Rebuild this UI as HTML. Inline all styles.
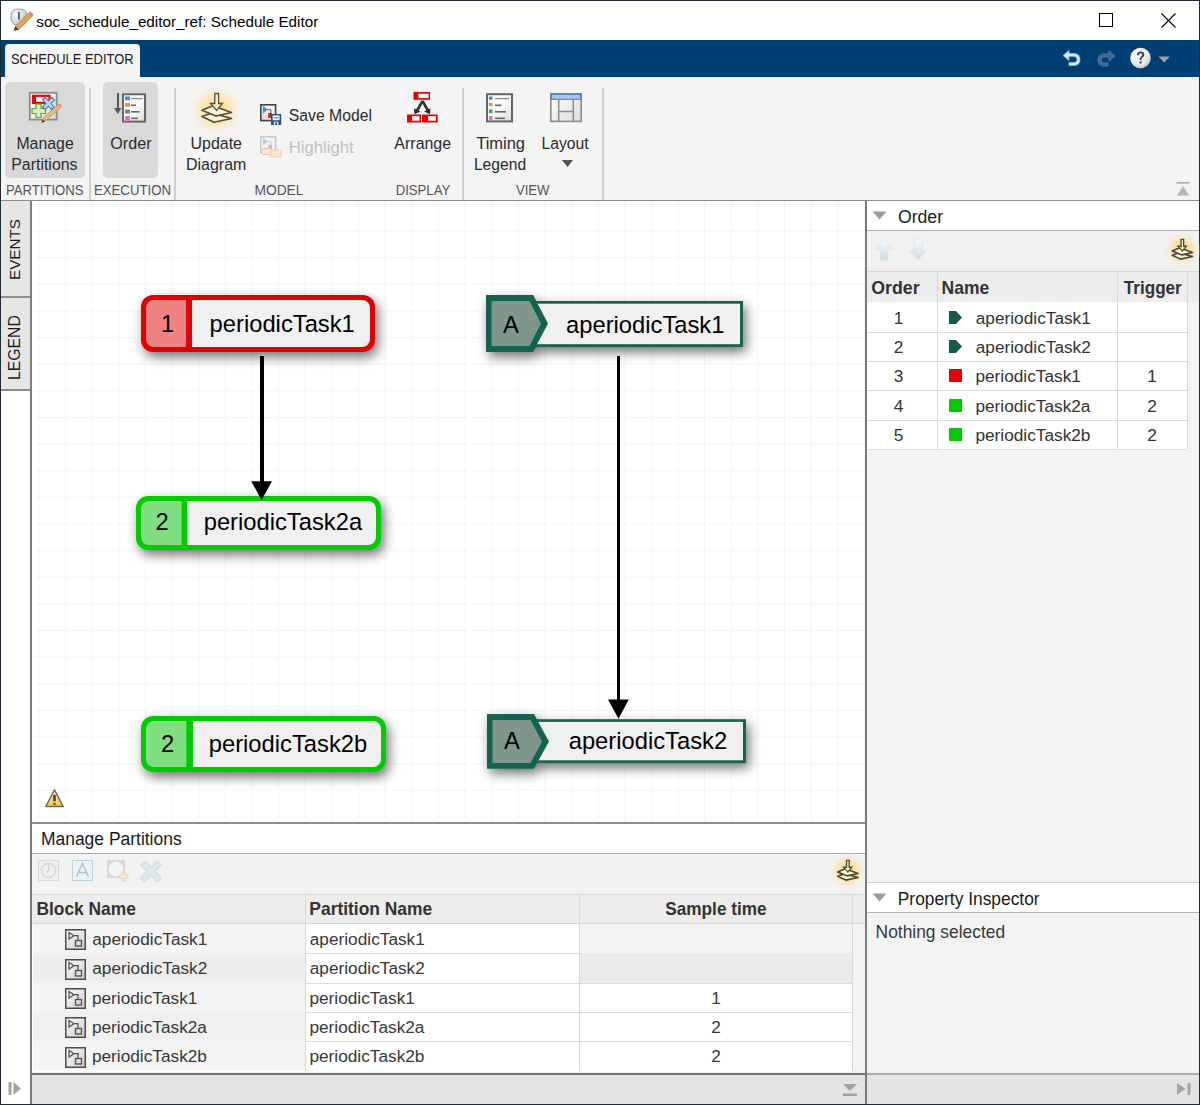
<!DOCTYPE html>
<html><head><meta charset="utf-8">
<style>
*{box-sizing:border-box;margin:0;padding:0}
html,body{width:1200px;height:1105px;overflow:hidden;background:#fff;font-family:"Liberation Sans",sans-serif;position:relative}
.a{position:absolute}
.rt{position:absolute;font-size:15.5px;color:#1f1f1f;white-space:nowrap;line-height:18px}
.gl{position:absolute;font-size:13px;color:#555;white-space:nowrap;line-height:15px;transform:scaleY(1.12);transform-origin:0 100%}
.pt{position:absolute;font-size:17.25px;color:#333;white-space:nowrap;line-height:20px}
.pb{position:absolute;font-size:17px;font-weight:bold;color:#333;white-space:nowrap;line-height:20px}
.nt{position:absolute;font-size:23.75px;color:#000;white-space:nowrap;line-height:28px}
.hl{position:absolute;background:#d9d9d9;border-radius:5px}
.sep{position:absolute;width:2px;background:#d0d0d0}
</style></head><body>
<!-- window border -->
<div class="a" style="left:0;top:0;width:1200px;height:1px;background:#1e2a36"></div>
<div class="a" style="left:0;top:0;width:1px;height:1105px;background:#1e2a36"></div>
<div class="a" style="left:1199px;top:0;width:1px;height:1105px;background:#1e2a36"></div>

<!-- title -->
<div class="a" style="left:1099px;top:13px;width:14px;height:14px;border:1px solid #000"></div>
<svg class="a" style="left:1160px;top:12px" width="17" height="17"><path d="M1.5 1.5L15.5 15.5M15.5 1.5L1.5 15.5" stroke="#000" stroke-width="1.1"/></svg>

<!-- blue band -->
<div class="a" style="left:1px;top:40px;width:1198px;height:37px;background:#003f73"></div>
<div class="a" style="left:5px;top:44px;width:135px;height:33px;background:#f4f4f4;border-radius:4px 4px 0 0"></div>

<!-- ribbon -->
<div class="a" style="left:1px;top:77px;width:1198px;height:123px;background:#f4f4f4"></div>
<div class="a" style="left:1px;top:200px;width:1198px;height:1px;background:#8c8c8c"></div>
<div class="hl" style="left:5px;top:82px;width:80px;height:96px"></div>
<div class="hl" style="left:103px;top:82px;width:55px;height:96px"></div>
<div class="sep" style="left:89px;top:88px;height:112px"></div>
<div class="sep" style="left:174px;top:88px;height:112px"></div>
<div class="sep" style="left:462px;top:88px;height:112px"></div>
<div class="sep" style="left:602px;top:88px;height:112px"></div>

<svg class="a" style="left:562px;top:160px" width="11" height="8"><path d="M0 0H11L5.5 7Z" fill="#555"/></svg>



<!-- title icon -->
<svg class="a" style="left:10px;top:8px" width="24" height="24" viewBox="0 0 24 24">
<defs><radialGradient id="clk" cx="0.35" cy="0.35" r="0.75"><stop offset="0" stop-color="#f2f6f8"/><stop offset="1" stop-color="#bcc6ce"/></radialGradient></defs>
<path d="M1 7.5Q1 1 8.5 1H10Q17 1 17 8V10Q17 17.5 9 17.5Q1 17.5 1 10Z" fill="url(#clk)" stroke="#9ca2a8" stroke-width="1"/>
<rect x="8" y="4" width="1.8" height="7.5" fill="#5a5a5a"/>
<path d="M5.3 18.3L18.8 4.8L22.2 8.2L8.7 21.7Z" fill="#e4a458" stroke="#a87034" stroke-width="0.7"/>
<path d="M18.8 4.8L20.3 3.3L23.7 6.7L22.2 8.2Z" fill="#e67aa0"/>
<path d="M3.6 22.8L5.3 18.3L8.7 21.7Z" fill="#3a3a3a"/>
</svg>

<!-- undo / redo / help -->
<svg class="a" style="left:1060px;top:48px" width="24" height="21" viewBox="0 0 24 21">
<path d="M3 7.5L9 2.5V5.5H14Q20 5.5 20 11.5Q20 17.5 14 17.5H9V14.5H14Q17 14.5 17 11.5Q17 8.5 14 8.5H9V12.5Z" fill="#d4e8f6" stroke="#8fb6d8" stroke-width="0.8"/>
</svg>
<svg class="a" style="left:1094px;top:49px" width="24" height="20" viewBox="0 0 24 20">
<path d="M21 7L15 2V5H10Q4 5 4 11Q4 17 10 17H14V14H10Q7 14 7 11Q7 8 10 8H15V12Z" fill="#3f6890" stroke="#5a80a8" stroke-width="0.8"/>
</svg>
<svg class="a" style="left:1129px;top:47px" width="23" height="22" viewBox="0 0 23 22">
<defs><radialGradient id="hg" cx="0.4" cy="0.35" r="0.7"><stop offset="0" stop-color="#ffffff"/><stop offset="0.7" stop-color="#e6e8ea"/><stop offset="1" stop-color="#b8bcc0"/></radialGradient></defs>
<circle cx="11.5" cy="11" r="10.3" fill="url(#hg)"/>
<path d="M8 8.2Q8 4.5 11.7 4.5Q15.3 4.5 15.3 7.7Q15.3 9.6 13.2 10.7Q12.3 11.3 12.3 13H10.6Q10.5 10.5 12 9.5Q13.3 8.6 13.3 7.8Q13.3 6.3 11.6 6.3Q10.1 6.3 10 8.2Z" fill="#3b3d52"/>
<rect x="10.6" y="14.3" width="1.9" height="2.2" fill="#3b3d52"/>
</svg>
<svg class="a" style="left:1158px;top:56px" width="13" height="7"><path d="M0.5 0.5H12L6.2 6.5Z" fill="#a39e99"/></svg>

<!-- Manage Partitions icon -->
<svg class="a" style="left:28px;top:91px" width="36" height="36" viewBox="28 91 36 36">
<defs><linearGradient id="fr" x1="0" y1="0" x2="1" y2="1"><stop offset="0" stop-color="#fff"/><stop offset="1" stop-color="#dcdcdc"/></linearGradient></defs>
<rect x="29.8" y="92.8" width="26.8" height="26.8" fill="url(#fr)" stroke="#8c8c8c" stroke-width="1.8"/>
<rect x="33" y="95.8" width="16.5" height="7" fill="#fff" stroke="#ee0000" stroke-width="2.2"/>
<rect x="32" y="95" width="4" height="9" fill="#ee0000"/>
<path d="M36 104H41V108.5H45.5V113.5H41V117.5H36V113.5H32V108.5H36Z" fill="#d6ecb0" stroke="#5ea040" stroke-width="1.2"/>
<path d="M42.5 99.5L45 97.5L48.5 101L52 97.5L54.5 100L51 103.5L54 107L51.5 109.5L48.5 106L45 109.5L42.5 107L46 103.5Z" fill="#bcdcf0" stroke="#5078a8" stroke-width="1.1"/>
<path d="M42 121.5L44 117L58.5 104.5L61 107L47 119.5Z" fill="#e6bc80" stroke="#b88a50" stroke-width="0.8"/>
<path d="M58.5 104.5L59.8 103.3L62.3 105.8L61 107Z" fill="#e888b8"/>
<path d="M41.5 123L42.5 119.8L45 121.5Z" fill="#333"/>
</svg>

<!-- Order icon -->
<svg class="a" style="left:112px;top:91px" width="36" height="34" viewBox="112 91 36 34">
<defs><linearGradient id="fr2" x1="0" y1="0" x2="1" y2="1"><stop offset="0" stop-color="#fff"/><stop offset="0.6" stop-color="#f6f6f6"/><stop offset="1" stop-color="#d6d6d6"/></linearGradient></defs>
<rect x="117" y="93" width="2" height="16" fill="#555"/>
<path d="M114 108H121.5L117.8 114Z" fill="#555"/>
<rect x="123" y="94.3" width="22" height="27.3" fill="url(#fr2)" stroke="#666" stroke-width="2"/>
<rect x="125" y="96.5" width="5" height="3.8" fill="#3a8ee0"/>
<rect x="125" y="103" width="5" height="3.8" fill="#e89040"/>
<rect x="125" y="109.5" width="5" height="4" fill="#40a060"/>
<rect x="125" y="116" width="5" height="4.8" fill="#e070d0"/>
<rect x="131" y="98" width="11.5" height="1.2" fill="#888"/>
<rect x="131" y="104.5" width="5" height="1.6" fill="#666"/>
<rect x="131" y="111" width="8.5" height="1.6" fill="#666"/>
<rect x="131" y="117.5" width="7" height="1.6" fill="#666"/>
</svg>

<!-- Update Diagram icon -->
<svg class="a" style="left:186px;top:84px" width="60" height="56" viewBox="186 84 60 56">
<defs><radialGradient id="glow" cx="0.5" cy="0.5" r="0.5"><stop offset="0" stop-color="#fcd98c" stop-opacity="1"/><stop offset="0.5" stop-color="#fde3aa" stop-opacity="0.85"/><stop offset="1" stop-color="#f4f4f4" stop-opacity="0"/></radialGradient></defs>
<ellipse cx="216" cy="110" rx="29" ry="27" fill="url(#glow)"/>
<path d="M202 116.5L212 113L231.5 118.5L214 122.2Z" fill="#f8f2d4" stroke="#524c34" stroke-width="1.6" stroke-linejoin="round"/>
<path d="M202 110.3L213 105.8L231.5 112.5L216 116Z" fill="#fcf8dc" stroke="#524c34" stroke-width="1.6" stroke-linejoin="round"/>
<path d="M214.8 93.5H218.6V103.5H222.5L216.7 110.5L210.5 103.5H214.8Z" fill="#f6f0c8" stroke="#5e5236" stroke-width="1.3"/>
</svg>

<!-- Save Model icon -->
<svg class="a" style="left:259px;top:103px" width="24" height="24" viewBox="259 103 24 24">
<defs><linearGradient id="fr3" x1="1" y1="0" x2="0" y2="1"><stop offset="0" stop-color="#fff"/><stop offset="1" stop-color="#d4d4d4"/></linearGradient></defs>
<rect x="260.8" y="104.8" width="14.8" height="15.8" fill="url(#fr3)" stroke="#444" stroke-width="1.6"/>
<path d="M263 106L267.8 109.6L263 113.5Z" fill="#3a8ee0"/>
<path d="M267.5 109.6H270.8V113.5" stroke="#555" stroke-width="1" fill="none"/>
<rect x="268.2" y="113" width="3.8" height="5" fill="#c42a1a"/>
<rect x="271" y="114" width="10.2" height="11" fill="#214f86"/>
<rect x="272.6" y="115.4" width="7" height="4.8" fill="#f4f6f8"/>
<rect x="273.4" y="117.3" width="5.4" height="1" fill="#4a78b0"/>
<rect x="273.8" y="121.6" width="4.6" height="3.4" fill="#e8ecf0"/>
<rect x="275.4" y="122.3" width="1.4" height="2.7" fill="#222"/>
</svg>

<!-- Highlight icon (disabled) -->
<svg class="a" style="left:259px;top:135px" width="24" height="24" viewBox="259 135 24 24">
<rect x="260.8" y="136.8" width="14.8" height="15.8" fill="#f2f2f2" stroke="#c4c4c4" stroke-width="1.4"/>
<path d="M263 138L267.8 141.6L263 145.5Z" fill="#a8d0f4"/>
<path d="M267.5 141.6H270.8V145.5" stroke="#c8c8c8" stroke-width="1" fill="none"/>
<rect x="268.2" y="145" width="3.8" height="5" fill="#eab4b4"/>
<rect x="262" y="148.5" width="10" height="6" rx="2" fill="#f8e8cc" stroke="#ecc0b0" stroke-width="1"/>
<rect x="271" y="150" width="10" height="7" fill="#f8e6cc" stroke="#ecc8b8" stroke-width="0.8"/>
</svg>

<!-- Arrange icon -->
<svg class="a" style="left:405px;top:90px" width="36" height="34" viewBox="405 90 36 34">
<rect x="413.5" y="92" width="16.5" height="7.8" fill="#e80000"/>
<rect x="418.5" y="93.7" width="10" height="4.4" fill="#fff"/>
<rect x="407" y="114.5" width="14" height="8" fill="#e80000"/>
<rect x="412" y="116.2" width="7.5" height="4.5" fill="#fff"/>
<rect x="422" y="114.5" width="15.7" height="8" fill="#e80000"/>
<rect x="428" y="116.2" width="8" height="4.5" fill="#fff"/>
<path d="M422.5 101L416.5 111.5M422.5 101L428.5 111.5" stroke="#333" stroke-width="2.6" fill="none"/>
<path d="M414 108.5L414.5 114.3L420.5 111.5Z" fill="#2a2a2a"/>
<path d="M430.5 108.5L430 114.3L424 111.5Z" fill="#2a2a2a"/>
</svg>

<!-- Timing Legend icon -->
<svg class="a" style="left:485px;top:92px" width="30" height="32" viewBox="485 92 30 32">
<rect x="487" y="94.2" width="25" height="27.2" fill="url(#fr2)" stroke="#666" stroke-width="2"/>
<rect x="489" y="96.5" width="3.5" height="3.2" fill="#3a8ee0"/>
<rect x="489" y="103" width="3.5" height="3.2" fill="#e89040"/>
<rect x="489" y="109.5" width="3.5" height="3.6" fill="#40a060"/>
<rect x="489" y="116" width="3.5" height="4" fill="#e070d0"/>
<rect x="495" y="98" width="14" height="1.2" fill="#888"/>
<rect x="495" y="104.5" width="6.5" height="1.6" fill="#666"/>
<rect x="495" y="111" width="11" height="1.6" fill="#666"/>
<rect x="495" y="117.5" width="10" height="1.6" fill="#666"/>
</svg>

<!-- Layout icon -->
<svg class="a" style="left:549px;top:92px" width="35" height="32" viewBox="549 92 35 32">
<defs><linearGradient id="lg" x1="0" y1="0" x2="1" y2="1"><stop offset="0" stop-color="#fff"/><stop offset="1" stop-color="#dcdcdc"/></linearGradient></defs>
<rect x="550.8" y="93.8" width="30.4" height="27.6" fill="url(#lg)" stroke="#8a8a8a" stroke-width="1.6"/>
<rect x="551.3" y="94.3" width="29.4" height="5" fill="#a4c4ea" stroke="#4a78b0" stroke-width="1"/>
<path d="M558.7 99.5V121M573.3 99.5V121M558.7 111.5H573.3" stroke="#8a8a8a" stroke-width="1.5"/>
</svg>
<!-- collapse ribbon -->
<svg class="a" style="left:1175px;top:181px" width="16" height="16"><rect x="1.5" y="1" width="13" height="1.6" fill="#a8a8a8"/><path d="M2 14.5H14L8 5Z" fill="#b4b4b4"/></svg>

<!-- sidebar -->
<div class="a" style="left:1px;top:201px;width:29px;height:96px;background:#e6e6e6"></div>
<div class="a" style="left:1px;top:296px;width:29px;height:2px;background:#8c8c8c"></div>
<div class="a" style="left:1px;top:298px;width:29px;height:91px;background:#e6e6e6"></div>
<div class="a" style="left:1px;top:389px;width:29px;height:2px;background:#8c8c8c"></div>

<div class="a" style="left:8px;top:280px;transform:rotate(-90deg);transform-origin:0 0;font-size:15.25px;color:#1a1a1a;line-height:14px;white-space:nowrap">EVENTS</div>
<div class="a" style="left:8px;top:380px;transform:rotate(-90deg);transform-origin:0 0;font-size:15.75px;color:#1a1a1a;line-height:14px;white-space:nowrap">LEGEND</div>

<!-- canvas -->
<div id="canvas" class="a" style="left:32px;top:201px;width:833px;height:621px;background-color:#fff;
background-image:linear-gradient(to right,#f2f4f6 1px,transparent 1px),linear-gradient(to bottom,#f2f4f6 1px,transparent 1px);
background-size:26.63px 26.63px;background-position:6.5px 3px"></div>

<div class="a" style="left:32px;top:822px;width:833px;height:2px;background:#8c8c8c"></div>


<!-- canvas content -->
<svg class="a" style="left:32px;top:201px" width="833" height="621" viewBox="32 201 833 621">
<defs>
<filter id="sh" x="-20%" y="-40%" width="150%" height="200%"><feDropShadow dx="3" dy="5" stdDeviation="6" flood-color="#000" flood-opacity="0.55"/></filter>
<clipPath id="c1"><rect x="146" y="300" width="224" height="47" rx="8"/></clipPath>
<clipPath id="c2"><rect x="141" y="501" width="235" height="44" rx="8"/></clipPath>
<clipPath id="c3"><rect x="146" y="721" width="235" height="46" rx="8"/></clipPath>
</defs>
<!-- periodicTask1 -->
<g filter="url(#sh)">
<rect x="141" y="295" width="234" height="57" rx="12" fill="#e20000"/>
</g>
<g clip-path="url(#c1)"><rect x="146" y="300" width="40" height="47" fill="#ee8282"/><rect x="192" y="300" width="178" height="47" fill="#f0f0f0"/></g>
<text x="161" y="332.20" font-family="Liberation Sans" font-size="23.75" fill="#000">1</text>
<text x="209.6" y="332.20" font-family="Liberation Sans" font-size="23.75" fill="#000">periodicTask1</text>

<!-- periodicTask2a -->
<g filter="url(#sh)">
<rect x="136" y="496" width="245" height="54" rx="12" fill="#00cc00"/>
</g>
<g clip-path="url(#c2)"><rect x="141" y="501" width="40.6" height="44" fill="#80dd80"/><rect x="187.4" y="501" width="189" height="44" fill="#f0f0f0"/></g>
<text x="155.6" y="530.20" font-family="Liberation Sans" font-size="23.75" fill="#000">2</text>
<text x="203.7" y="530.20" font-family="Liberation Sans" font-size="23.75" fill="#000">periodicTask2a</text>

<!-- periodicTask2b -->
<g filter="url(#sh)">
<rect x="141" y="716" width="245" height="56" rx="12" fill="#00cc00"/>
</g>
<g clip-path="url(#c3)"><rect x="146" y="721" width="40.3" height="46" fill="#80dd80"/><rect x="193" y="721" width="189" height="46" fill="#f0f0f0"/></g>
<text x="161" y="751.75" font-family="Liberation Sans" font-size="23.75" fill="#000">2</text>
<text x="208.75" y="751.75" font-family="Liberation Sans" font-size="23.75" fill="#000">periodicTask2b</text>

<!-- aperiodicTask1 -->
<g filter="url(#sh)">
<rect x="534" y="301" width="209" height="46" fill="#12634f"/>
<path d="M486 295H533L548 323.5L533 352H486Z" fill="#12634f"/>
</g>
<rect x="537" y="303.7" width="203" height="40.5" fill="#f0f0f0"/>
<path d="M486 295H533L548 323.5L533 352H486Z" fill="#12634f"/>
<path d="M491.5 301H529.5L541 323.5L529.5 346H491.5Z" fill="#7f968c"/>
<text x="503" y="332.50" font-family="Liberation Sans" font-size="23.75" fill="#000">A</text>
<text x="566" y="332.50" font-family="Liberation Sans" font-size="23.75" fill="#000">aperiodicTask1</text>

<!-- aperiodicTask2 -->
<g filter="url(#sh)">
<rect x="535" y="719.2" width="211" height="43.8" fill="#12634f"/>
<path d="M487 714.3H534L549 741.4L534 768.5H487Z" fill="#12634f"/>
</g>
<rect x="538" y="721.9" width="205" height="38.4" fill="#f0f0f0"/>
<path d="M487 714.3H534L549 741.4L534 768.5H487Z" fill="#12634f"/>
<path d="M492.5 720H530.5L542 741.4L530.5 763H492.5Z" fill="#7f968c"/>
<text x="504" y="748.80" font-family="Liberation Sans" font-size="23.75" fill="#000">A</text>
<text x="568.7" y="748.80" font-family="Liberation Sans" font-size="23.75" fill="#000">aperiodicTask2</text>

<!-- connections -->
<rect x="260" y="356" width="4" height="126" fill="#000"/>
<path d="M251.2 481.2H272L261.6 500Z" fill="#000"/>
<rect x="617" y="356" width="3" height="345" fill="#000"/>
<path d="M608 699.6H628.8L618.5 718.8Z" fill="#000"/>
</svg>

<!-- right panel -->
<div class="a" style="left:867px;top:201px;width:332px;height:872px;background:#f3f3f3"></div>


<div class="a" style="left:867px;top:201px;width:332px;height:29px;background:#fff"></div>
<div class="a" style="left:867px;top:230px;width:332px;height:1px;background:#b4b4b4"></div>
<svg class="a" style="left:872px;top:211px" width="15" height="9"><path d="M0.5 0.5H14.5L7.5 8.5Z" fill="#9c9c9c"/></svg>
<div class="a" style="left:867px;top:231px;width:332px;height:40px;background:#f1f1f1"></div>
<div class="a" style="left:867px;top:271px;width:332px;height:1px;background:#d6d6d6"></div>
<!-- up/down arrows disabled -->
<svg class="a" style="left:874px;top:238px" width="20" height="23" viewBox="0 0 20 23"><defs><linearGradient id="ag" x1="0" y1="0" x2="0" y2="1"><stop offset="0" stop-color="#f4fafc"/><stop offset="1" stop-color="#cfdde4"/></linearGradient></defs><path d="M10 1L19 11H14V22H6V11H1Z" fill="url(#ag)" stroke="#d8e4ea" stroke-width="0.8"/></svg>
<svg class="a" style="left:908px;top:238px" width="20" height="23" viewBox="0 0 20 23"><path d="M6 1H14V12H19L10 22L1 12H6Z" fill="url(#ag)" stroke="#d8e4ea" stroke-width="0.8"/></svg>
<!-- update icon small -->
<svg class="a" style="left:1158px;top:230px" width="42" height="40" viewBox="1158 230 42 40">
<ellipse cx="1182" cy="250" rx="20" ry="19.5" fill="url(#glow2)"/>
<g transform="translate(1171.5 239.0) scale(0.690)">
<path d="M1 23.5L11 20L30.5 25.5L13 29.2Z" fill="#f8f2d4" stroke="#4a4430" stroke-width="2.3" stroke-linejoin="round"/>
<path d="M1 17.3L12 12.8L30.5 19.5L15 23Z" fill="#fcf8dc" stroke="#4a4430" stroke-width="2.3" stroke-linejoin="round"/>
<path d="M13.8 0.5H17.6V10.5H21.5L15.7 17.5L9.5 10.5H13.8Z" fill="#f6f0c8" stroke="#54482e" stroke-width="1.9"/>
</g>
</svg>
<!-- table header -->
<div class="a" style="left:867px;top:272px;width:332px;height:30px;background:#ececec"></div>
<div class="a" style="left:867px;top:302px;width:320px;height:147px;background:#fff"></div>
<div class="a" style="left:937px;top:272px;width:1px;height:177px;background:#d9d9d9"></div>
<div class="a" style="left:1117px;top:272px;width:1px;height:177px;background:#d9d9d9"></div>
<div class="a" style="left:1187px;top:272px;width:1px;height:177px;background:#d9d9d9"></div>
<div class="a" style="left:867px;top:332.0px;width:320px;height:1px;background:#dcdcdc"></div>
<svg class="a" style="left:949px;top:311.0px" width="13" height="13"><path d="M0 0H7L13 6.5L7 13H0Z" fill="#155c4a"/></svg>
<div class="a" style="left:867px;top:361.2px;width:320px;height:1px;background:#dcdcdc"></div>
<svg class="a" style="left:949px;top:340.2px" width="13" height="13"><path d="M0 0H7L13 6.5L7 13H0Z" fill="#155c4a"/></svg>
<div class="a" style="left:867px;top:390.4px;width:320px;height:1px;background:#dcdcdc"></div>
<div class="a" style="left:949px;top:369.4px;width:13px;height:13px;background:#e60000"></div>
<div class="a" style="left:867px;top:419.6px;width:320px;height:1px;background:#dcdcdc"></div>
<div class="a" style="left:949px;top:398.6px;width:13px;height:13px;background:#00cc00"></div>
<div class="a" style="left:867px;top:448.8px;width:320px;height:1px;background:#dcdcdc"></div>
<div class="a" style="left:949px;top:427.8px;width:13px;height:13px;background:#00cc00"></div>

<!-- property inspector -->
<div class="a" style="left:867px;top:882px;width:332px;height:1px;background:#d0d0d0"></div>
<div class="a" style="left:867px;top:883px;width:332px;height:29px;background:#fff"></div>
<div class="a" style="left:867px;top:912px;width:332px;height:1px;background:#b4b4b4"></div>
<svg class="a" style="left:872px;top:893px" width="15" height="9"><path d="M0.5 0.5H14.5L7.5 8.5Z" fill="#9c9c9c"/></svg>

<!-- bottom panel -->
<div class="a" style="left:32px;top:824px;width:833px;height:249px;background:#f3f3f3"></div>


<div class="a" style="left:32px;top:824px;width:833px;height:29px;background:#fff"></div>
<div class="a" style="left:32px;top:853px;width:833px;height:1px;background:#a8a8a8"></div>
<div class="a" style="left:32px;top:854px;width:833px;height:40px;background:#f2f2f2"></div>
<!-- toolbar icons (disabled) -->
<svg class="a" style="left:37px;top:859px" width="130" height="24" viewBox="37 859 130 24">
<rect x="38.5" y="860.5" width="20" height="20" fill="#f0f0f0" stroke="#d8d8d8" stroke-width="1"/>
<circle cx="48.5" cy="870.5" r="7" fill="none" stroke="#d4d4d4" stroke-width="1.3"/>
<path d="M48.5 864.5V870.8L46 873" stroke="#d0d0d0" stroke-width="1.2" fill="none"/>
<rect x="72.5" y="860.5" width="20" height="20" fill="#eef2f4" stroke="#b8d4dc" stroke-width="1"/>
<path d="M76.5 877L82.5 863L88.5 877M78.5 872.5H86.5" stroke="#a8c0c8" stroke-width="1.3" fill="none"/>
<rect x="107" y="860" width="18" height="18" fill="#d8d8d8"/>
<circle cx="116" cy="869" r="7.5" fill="#f4f4f4"/>
<path d="M122 872H125V875H128V878H125V881H122V878H119V875H122Z" fill="#f4eccc" stroke="#e0d4a8" stroke-width="0.8"/>
<path d="M140.5 865L144.5 861L151 867.5L157.5 861L161.5 865L155 871.5L161.5 878L157.5 882L151 875.5L144.5 882L140.5 878L147 871.5Z" fill="#dfe9ee" stroke="#c4d6de" stroke-width="1"/>
</svg>
<svg class="a" style="left:826px;top:852px" width="42" height="40" viewBox="826 852 42 40">
<defs><radialGradient id="glow2" cx="0.5" cy="0.5" r="0.5"><stop offset="0" stop-color="#fbd487" stop-opacity="1"/><stop offset="0.55" stop-color="#fde2a8" stop-opacity="0.75"/><stop offset="1" stop-color="#f4f4f4" stop-opacity="0"/></radialGradient></defs><ellipse cx="847.5" cy="871" rx="20" ry="19.5" fill="url(#glow2)"/>
<g transform="translate(837.0 860.0) scale(0.690)">
<path d="M1 23.5L11 20L30.5 25.5L13 29.2Z" fill="#f8f2d4" stroke="#4a4430" stroke-width="2.3" stroke-linejoin="round"/>
<path d="M1 17.3L12 12.8L30.5 19.5L15 23Z" fill="#fcf8dc" stroke="#4a4430" stroke-width="2.3" stroke-linejoin="round"/>
<path d="M13.8 0.5H17.6V10.5H21.5L15.7 17.5L9.5 10.5H13.8Z" fill="#f6f0c8" stroke="#54482e" stroke-width="1.9"/>
</g>
</svg>
<!-- header -->
<div class="a" style="left:32px;top:894px;width:833px;height:1px;background:#dadada"></div>
<div class="a" style="left:32px;top:895px;width:833px;height:28px;background:#ececec"></div>
<div class="a" style="left:32px;top:923px;width:821px;height:149px;background:#fff"></div>
<div class="a" style="left:32px;top:923px;width:833px;height:1px;background:#d4d4d4"></div>
<div class="a" style="left:33px;top:924.0px;width:272px;height:29.3px;background:#f4f4f4"></div>
<div class="a" style="left:580px;top:924.0px;width:273px;height:29.3px;background:#f3f3f3"></div>
<div class="a" style="left:33px;top:953.3px;width:820px;height:1px;background:#dcdcdc"></div>
<svg class="a" style="left:65px;top:929.3px" width="21" height="21" viewBox="0 0 21 21">
<rect x="0.75" y="0.75" width="19.5" height="19.5" fill="url(#bi)" stroke="#4a4a4a" stroke-width="1.5"/>
<path d="M4 3.5V10L9 6.7Z" fill="none" stroke="#555" stroke-width="1.3"/>
<path d="M9 6.7H13V11.5" fill="none" stroke="#555" stroke-width="1.3"/>
<rect x="10.5" y="11.5" width="6" height="5.5" fill="none" stroke="#555" stroke-width="1.4"/>
</svg>
<div class="a" style="left:33px;top:953.3px;width:272px;height:29.3px;background:#eeeeee"></div>
<div class="a" style="left:580px;top:953.3px;width:273px;height:29.3px;background:#ebebeb"></div>
<div class="a" style="left:33px;top:982.6px;width:820px;height:1px;background:#dcdcdc"></div>
<svg class="a" style="left:65px;top:958.6px" width="21" height="21" viewBox="0 0 21 21">
<rect x="0.75" y="0.75" width="19.5" height="19.5" fill="url(#bi)" stroke="#4a4a4a" stroke-width="1.5"/>
<path d="M4 3.5V10L9 6.7Z" fill="none" stroke="#555" stroke-width="1.3"/>
<path d="M9 6.7H13V11.5" fill="none" stroke="#555" stroke-width="1.3"/>
<rect x="10.5" y="11.5" width="6" height="5.5" fill="none" stroke="#555" stroke-width="1.4"/>
</svg>
<div class="a" style="left:33px;top:982.6px;width:272px;height:29.3px;background:#f4f4f4"></div>
<div class="a" style="left:33px;top:1011.9px;width:820px;height:1px;background:#dcdcdc"></div>
<svg class="a" style="left:65px;top:987.9px" width="21" height="21" viewBox="0 0 21 21">
<rect x="0.75" y="0.75" width="19.5" height="19.5" fill="url(#bi)" stroke="#4a4a4a" stroke-width="1.5"/>
<path d="M4 3.5V10L9 6.7Z" fill="none" stroke="#555" stroke-width="1.3"/>
<path d="M9 6.7H13V11.5" fill="none" stroke="#555" stroke-width="1.3"/>
<rect x="10.5" y="11.5" width="6" height="5.5" fill="none" stroke="#555" stroke-width="1.4"/>
</svg>
<div class="a" style="left:33px;top:1011.9px;width:272px;height:29.3px;background:#f0f0f0"></div>
<div class="a" style="left:33px;top:1041.2px;width:820px;height:1px;background:#dcdcdc"></div>
<svg class="a" style="left:65px;top:1017.2px" width="21" height="21" viewBox="0 0 21 21">
<rect x="0.75" y="0.75" width="19.5" height="19.5" fill="url(#bi)" stroke="#4a4a4a" stroke-width="1.5"/>
<path d="M4 3.5V10L9 6.7Z" fill="none" stroke="#555" stroke-width="1.3"/>
<path d="M9 6.7H13V11.5" fill="none" stroke="#555" stroke-width="1.3"/>
<rect x="10.5" y="11.5" width="6" height="5.5" fill="none" stroke="#555" stroke-width="1.4"/>
</svg>
<div class="a" style="left:33px;top:1041.2px;width:272px;height:29.3px;background:#f4f4f4"></div>
<svg class="a" style="left:65px;top:1046.5px" width="21" height="21" viewBox="0 0 21 21">
<rect x="0.75" y="0.75" width="19.5" height="19.5" fill="url(#bi)" stroke="#4a4a4a" stroke-width="1.5"/>
<path d="M4 3.5V10L9 6.7Z" fill="none" stroke="#555" stroke-width="1.3"/>
<path d="M9 6.7H13V11.5" fill="none" stroke="#555" stroke-width="1.3"/>
<rect x="10.5" y="11.5" width="6" height="5.5" fill="none" stroke="#555" stroke-width="1.4"/>
</svg>

<div class="a" style="left:305px;top:895px;width:1px;height:176px;background:#d9d9d9"></div>
<div class="a" style="left:579px;top:895px;width:1px;height:176px;background:#d9d9d9"></div>
<div class="a" style="left:852px;top:895px;width:1px;height:176px;background:#d9d9d9"></div>
<svg class="a" style="left:0;top:0" width="0" height="0"><defs><linearGradient id="bi" x1="0" y1="0" x2="1" y2="1"><stop offset="0" stop-color="#fafafa"/><stop offset="1" stop-color="#d0d0d0"/></linearGradient></defs></svg>

<!-- status bar -->
<div class="a" style="left:32px;top:1073px;width:834px;height:2px;background:#747474"></div>
<div class="a" style="left:866px;top:1073px;width:333px;height:2px;background:#a9a9a9"></div>
<div class="a" style="left:32px;top:1075px;width:1167px;height:30px;background:#e4e4e4"></div>
<div class="a" style="left:30px;top:201px;width:2px;height:904px;background:#7c7c7c"></div>
<div class="a" style="left:865px;top:201px;width:2px;height:904px;background:#7c7c7c"></div>

<svg class="a" style="left:8px;top:1081px" width="15" height="15"><rect x="0.5" y="1" width="3" height="13" fill="#a4a4a4"/><path d="M5.5 1V14L13 7.5Z" fill="#a4a4a4"/></svg>
<svg class="a" style="left:842px;top:1083px" width="16" height="14"><path d="M1 1H15L8 8Z" fill="#a0a0a0"/><rect x="1" y="10.5" width="14" height="2.5" fill="#a0a0a0"/></svg>
<svg class="a" style="left:1176px;top:1082px" width="16" height="14"><path d="M1 1V13L9.5 7Z" fill="#a4a4a4"/><rect x="11.5" y="1" width="3" height="12" fill="#a4a4a4"/></svg>
<div class="a" style="left:0;top:1104px;width:1200px;height:1px;background:#1e2a36"></div>
<!-- warning icon -->
<svg class="a" style="left:44px;top:788px" width="22" height="21" viewBox="0 0 22 21">
<defs><linearGradient id="wg" x1="0" y1="0" x2="0" y2="1"><stop offset="0" stop-color="#fff4b0"/><stop offset="1" stop-color="#f0c83c"/></linearGradient></defs>
<path d="M10.5 1.8L19.2 18.5H1.8Z" fill="url(#wg)" stroke="#6e6a5a" stroke-width="1.5" stroke-linejoin="round"/>
<rect x="9.2" y="7" width="2.6" height="6.3" fill="#444"/><rect x="9.4" y="14.8" width="2.2" height="2" fill="#444"/>
</svg>
<svg class="a" style="left:0;top:0" width="1200" height="1105" font-family="Liberation Sans">
<text x="36.28" y="26.60" font-size="15.50" fill="#000" textLength="281.98" lengthAdjust="spacingAndGlyphs">soc_schedule_editor_ref: Schedule Editor</text>
<text x="10.91" y="63.75" font-size="14.00" fill="#1a1a1a" textLength="122.69" lengthAdjust="spacingAndGlyphs">SCHEDULE EDITOR</text>
<text transform="translate(16.40 149.00) scale(1 1.060)" x="0" y="0" font-size="15.50" fill="#2a2a2a" textLength="57.31" lengthAdjust="spacingAndGlyphs">Manage</text>
<text transform="translate(11.19 170.00) scale(1 1.060)" x="0" y="0" font-size="15.50" fill="#2a2a2a" textLength="66.38" lengthAdjust="spacingAndGlyphs">Partitions</text>
<text transform="translate(110.13 149.00) scale(1 1.060)" x="0" y="0" font-size="15.50" fill="#2a2a2a" textLength="41.44" lengthAdjust="spacingAndGlyphs">Order</text>
<text transform="translate(190.47 149.00) scale(1 1.060)" x="0" y="0" font-size="15.50" fill="#2a2a2a" textLength="51.54" lengthAdjust="spacingAndGlyphs">Update</text>
<text transform="translate(185.99 170.00) scale(1 1.060)" x="0" y="0" font-size="15.50" fill="#2a2a2a" textLength="60.36" lengthAdjust="spacingAndGlyphs">Diagram</text>
<text transform="translate(288.78 120.60) scale(1 1.060)" x="0" y="0" font-size="15.50" fill="#2a2a2a" textLength="83.17" lengthAdjust="spacingAndGlyphs">Save Model</text>
<text transform="translate(394.37 149.00) scale(1 1.060)" x="0" y="0" font-size="15.50" fill="#2a2a2a" textLength="56.74" lengthAdjust="spacingAndGlyphs">Arrange</text>
<text transform="translate(476.24 149.00) scale(1 1.060)" x="0" y="0" font-size="15.50" fill="#2a2a2a" textLength="48.71" lengthAdjust="spacingAndGlyphs">Timing</text>
<text transform="translate(473.92 170.00) scale(1 1.060)" x="0" y="0" font-size="15.50" fill="#2a2a2a" textLength="52.19" lengthAdjust="spacingAndGlyphs">Legend</text>
<text transform="translate(541.51 149.00) scale(1 1.060)" x="0" y="0" font-size="15.50" fill="#2a2a2a" textLength="47.20" lengthAdjust="spacingAndGlyphs">Layout</text>
<text transform="translate(288.73 152.90) scale(1 1.060)" x="0" y="0" font-size="15.50" fill="#c0c0c0" textLength="64.99" lengthAdjust="spacingAndGlyphs">Highlight</text>
<text x="5.94" y="195.00" font-size="14.00" fill="#555" textLength="77.66" lengthAdjust="spacingAndGlyphs">PARTITIONS</text>
<text x="93.92" y="195.00" font-size="14.00" fill="#555" textLength="77.16" lengthAdjust="spacingAndGlyphs">EXECUTION</text>
<text x="254.47" y="195.30" font-size="14.00" fill="#555" textLength="48.99" lengthAdjust="spacingAndGlyphs">MODEL</text>
<text x="395.64" y="195.00" font-size="14.00" fill="#555" textLength="54.65" lengthAdjust="spacingAndGlyphs">DISPLAY</text>
<text x="515.94" y="195.00" font-size="14.00" fill="#555" textLength="33.40" lengthAdjust="spacingAndGlyphs">VIEW</text>
<text transform="translate(897.91 223.00) scale(1 1.060)" x="0" y="0" font-size="17.25" fill="#1a1a1a" textLength="45.18" lengthAdjust="spacingAndGlyphs">Order</text>
<text transform="translate(897.78 904.90) scale(1 1.060)" x="0" y="0" font-size="17.25" fill="#1a1a1a" textLength="141.81" lengthAdjust="spacingAndGlyphs">Property Inspector</text>
<text transform="translate(875.57 938.30) scale(1 1.040)" x="0" y="0" font-size="17.25" fill="#383838" textLength="129.55" lengthAdjust="spacingAndGlyphs">Nothing selected</text>
<text transform="translate(40.97 844.60) scale(1 1.060)" x="0" y="0" font-size="17.25" fill="#1a1a1a" textLength="140.66" lengthAdjust="spacingAndGlyphs">Manage Partitions</text>
<text transform="translate(871.27 293.70) scale(1 1.040)" x="0" y="0" font-size="17.25" fill="#333" font-weight="bold" textLength="48.30" lengthAdjust="spacingAndGlyphs">Order</text>
<text transform="translate(941.53 293.70) scale(1 1.040)" x="0" y="0" font-size="17.25" fill="#333" font-weight="bold" textLength="47.67" lengthAdjust="spacingAndGlyphs">Name</text>
<text transform="translate(1123.81 294.00) scale(1 1.040)" x="0" y="0" font-size="17.25" fill="#333" font-weight="bold" textLength="57.94" lengthAdjust="spacingAndGlyphs">Trigger</text>
<text transform="translate(36.44 914.50) scale(1 1.040)" x="0" y="0" font-size="17.25" fill="#333" font-weight="bold" textLength="99.46" lengthAdjust="spacingAndGlyphs">Block Name</text>
<text transform="translate(309.34 914.50) scale(1 1.040)" x="0" y="0" font-size="17.25" fill="#333" font-weight="bold" textLength="122.86" lengthAdjust="spacingAndGlyphs">Partition Name</text>
<text transform="translate(665.30 914.50) scale(1 1.040)" x="0" y="0" font-size="17.25" fill="#333" font-weight="bold" textLength="101.28" lengthAdjust="spacingAndGlyphs">Sample time</text>
<text x="898.50" y="324.00" font-size="17.25" fill="#333" text-anchor="middle">1</text>
<text x="975.77" y="324.00" font-size="17.25" fill="#333" >aperiodicTask1</text>
<text x="898.50" y="353.20" font-size="17.25" fill="#333" text-anchor="middle">2</text>
<text x="975.77" y="353.20" font-size="17.25" fill="#333" >aperiodicTask2</text>
<text x="898.50" y="382.40" font-size="17.25" fill="#333" text-anchor="middle">3</text>
<text x="975.39" y="382.40" font-size="17.25" fill="#333" >periodicTask1</text>
<text x="1152.00" y="382.40" font-size="17.25" fill="#333" text-anchor="middle">1</text>
<text x="898.50" y="411.60" font-size="17.25" fill="#333" text-anchor="middle">4</text>
<text x="975.39" y="411.60" font-size="17.25" fill="#333" >periodicTask2a</text>
<text x="1152.00" y="411.60" font-size="17.25" fill="#333" text-anchor="middle">2</text>
<text x="898.50" y="440.80" font-size="17.25" fill="#333" text-anchor="middle">5</text>
<text x="975.39" y="440.80" font-size="17.25" fill="#333" >periodicTask2b</text>
<text x="1152.00" y="440.80" font-size="17.25" fill="#333" text-anchor="middle">2</text>
<text x="92.27" y="945.00" font-size="17.25" fill="#383838" >aperiodicTask1</text>
<text x="309.77" y="945.00" font-size="17.25" fill="#383838" >aperiodicTask1</text>
<text x="92.27" y="974.30" font-size="17.25" fill="#383838" >aperiodicTask2</text>
<text x="309.77" y="974.30" font-size="17.25" fill="#383838" >aperiodicTask2</text>
<text x="91.89" y="1003.60" font-size="17.25" fill="#383838" >periodicTask1</text>
<text x="309.39" y="1003.60" font-size="17.25" fill="#383838" >periodicTask1</text>
<text x="716.00" y="1003.60" font-size="17.25" fill="#383838" text-anchor="middle">1</text>
<text x="91.89" y="1032.90" font-size="17.25" fill="#383838" >periodicTask2a</text>
<text x="309.39" y="1032.90" font-size="17.25" fill="#383838" >periodicTask2a</text>
<text x="716.00" y="1032.90" font-size="17.25" fill="#383838" text-anchor="middle">2</text>
<text x="91.89" y="1062.20" font-size="17.25" fill="#383838" >periodicTask2b</text>
<text x="309.39" y="1062.20" font-size="17.25" fill="#383838" >periodicTask2b</text>
<text x="716.00" y="1062.20" font-size="17.25" fill="#383838" text-anchor="middle">2</text>
</svg>
</body></html>
